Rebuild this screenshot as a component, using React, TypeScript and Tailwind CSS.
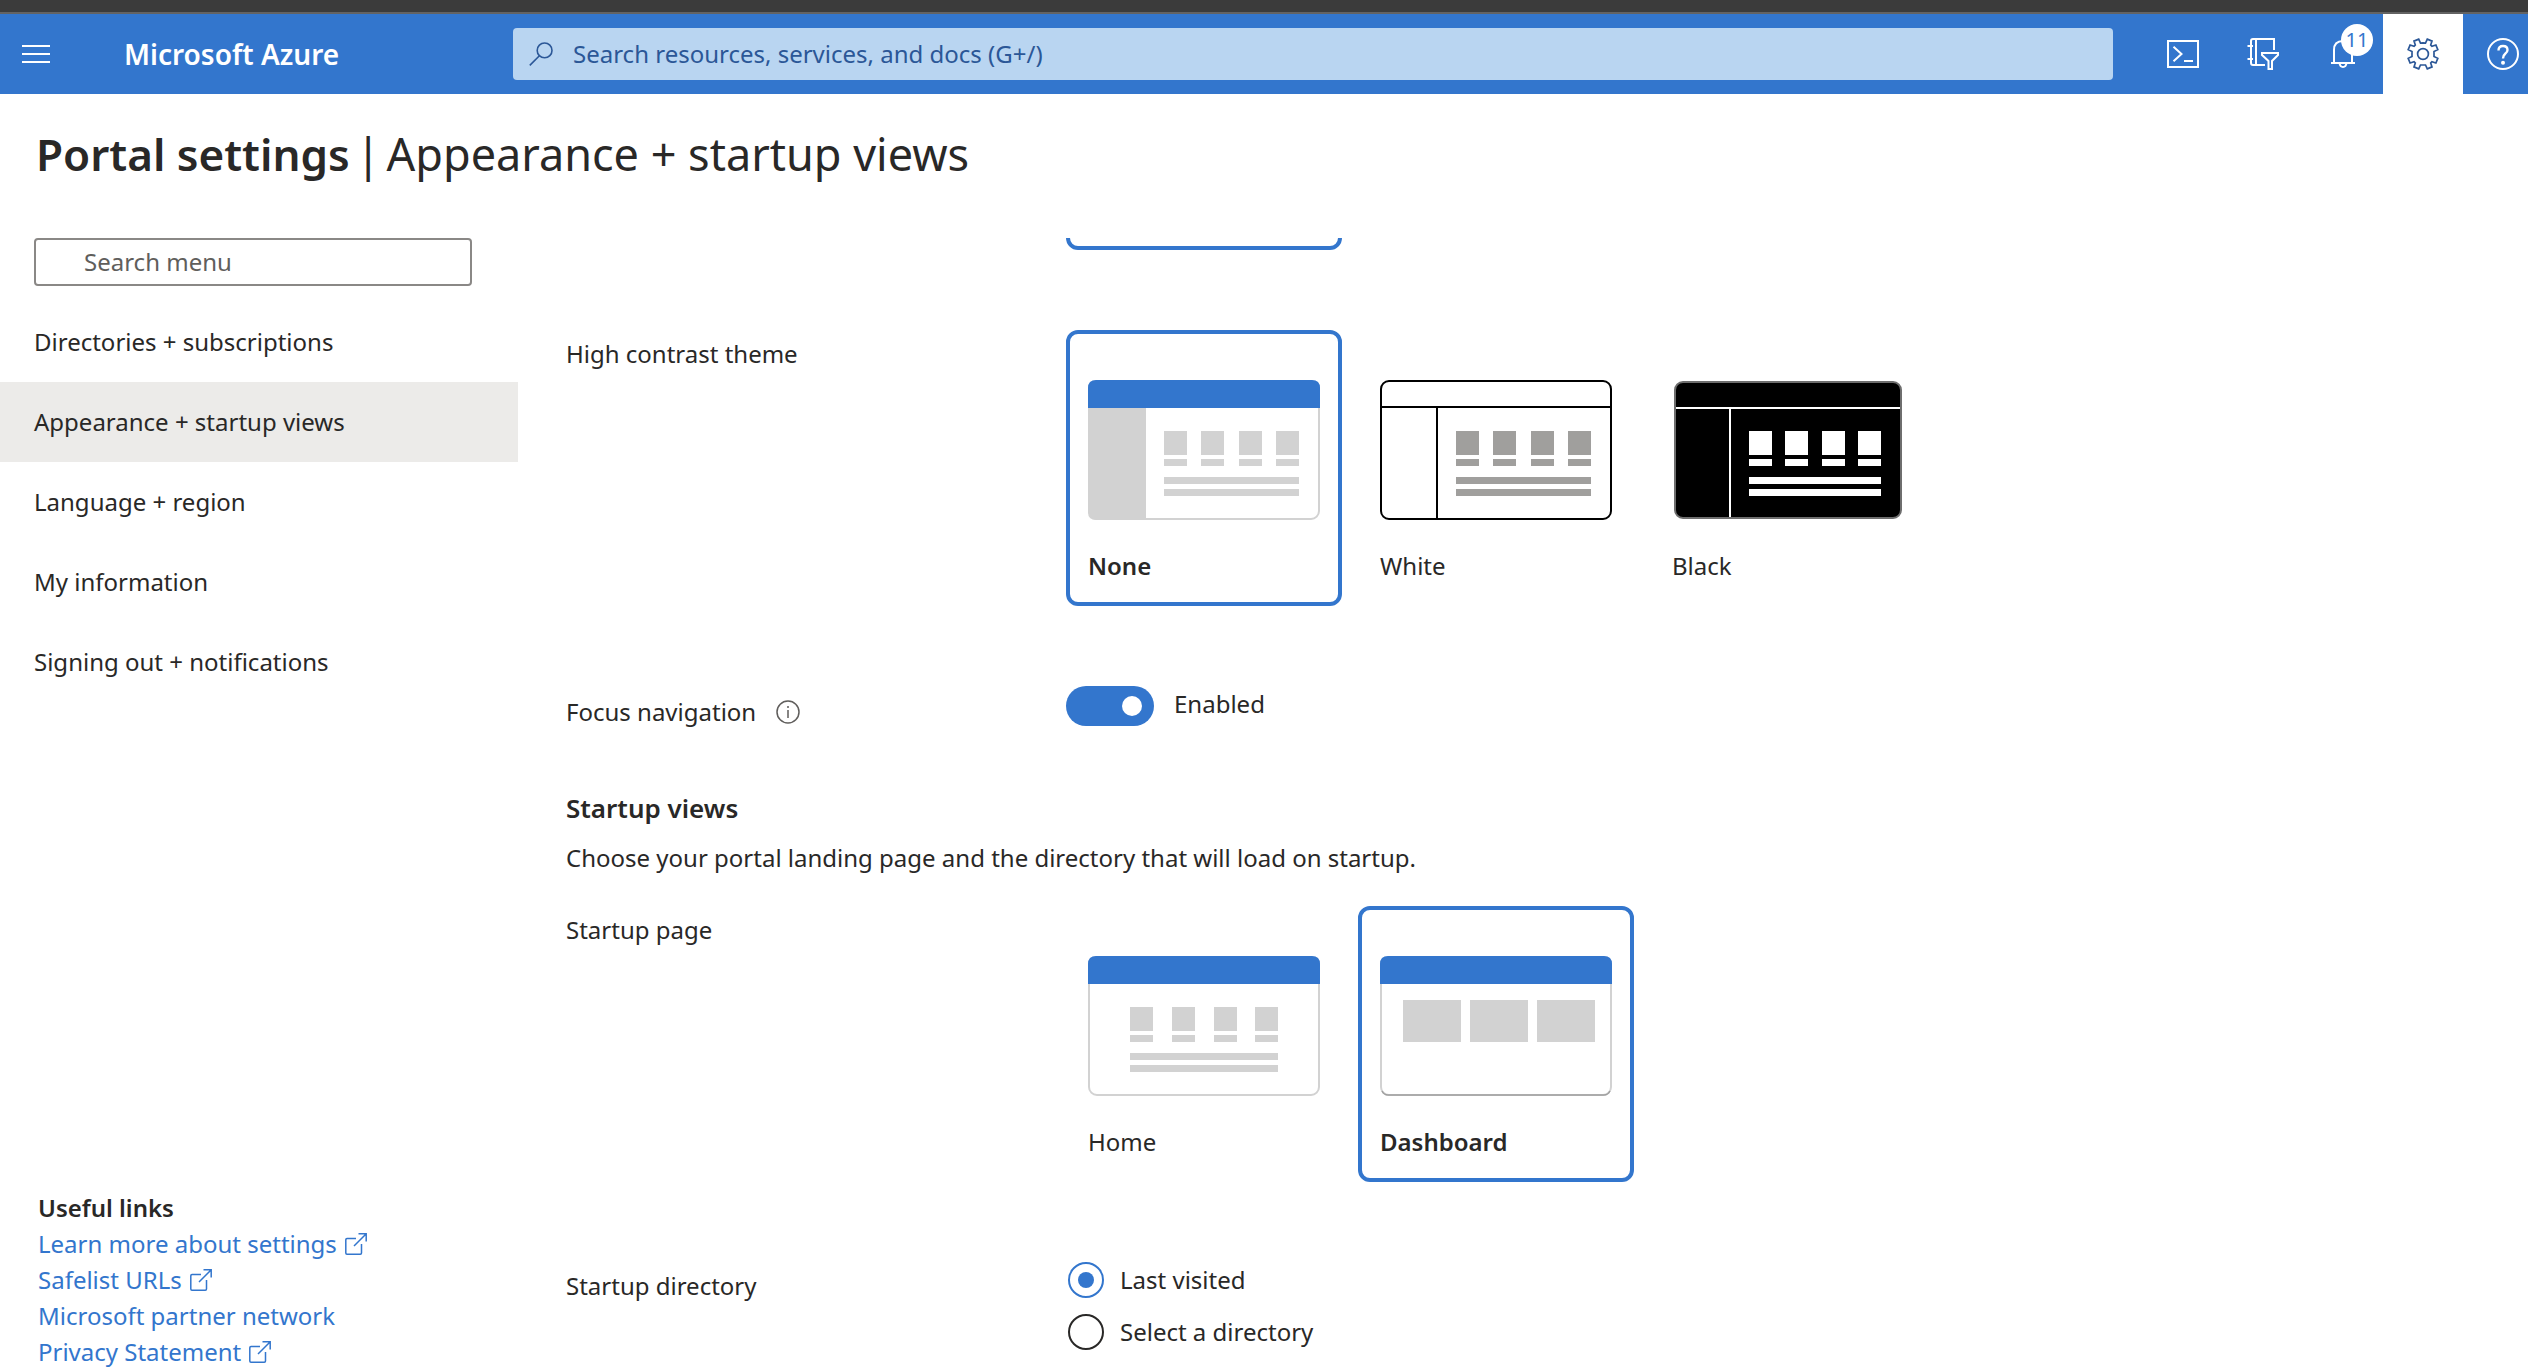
import React, { useState } from "react";

type IconProps = { className?: string };

const SearchIcon = ({ className }: IconProps) => (
  <svg viewBox="0 0 24 24" className={className} fill="none" stroke="currentColor" strokeWidth="1.6">
    <circle cx="15.6" cy="8.4" r="7.4" />
    <path d="M10.4 13.8L0.8 23.4" />
  </svg>
);

const CloudShellIcon = ({ className }: IconProps) => (
  <svg viewBox="0 0 32 32" className={className} fill="none" stroke="currentColor" strokeWidth="2">
    <path d="M1 3H31V29H1Z" />
    <path d="M6.5 8.8L14.5 16L6.5 23.2M17 23H26" />
  </svg>
);

const DirectoryFilterIcon = ({ className }: IconProps) => (
  <svg viewBox="0 0 32 32" className={className} fill="none" stroke="currentColor" strokeWidth="2">
    <path d="M27 12V1H6Q4 1 4 3V25Q4 27 6 27H18M9 1V27" />
    <path d="M0.500 8H6M0.500 21H6" />
    <path d="M15 15H31V17L25 23V31H21.500V23L15 17Z" />
  </svg>
);

const BellIcon = ({ className }: IconProps) => (
  <svg viewBox="0 0 24 32" className={className} fill="none" stroke="currentColor" strokeWidth="2">
    <path d="M3 25V12Q3 3 12 3Q21 3 21 12V25M0 25H24" />
    <path d="M8.500 25Q9 29 12 29Q15 29 15.500 25" />
  </svg>
);

const GearIcon = ({ className }: IconProps) => (
  <svg viewBox="0 0 32 32" className={className} fill="none" stroke="currentColor" strokeWidth="1.7">
    <circle cx="16" cy="16" r="5.400" />
    <path d="M16 4.800L18.500 5L20.300 1.200L25 3.100L23.700 7.100L24.900 8.300L28.900 7L30.800 11.700L27 13.500V18.500L30.800 20.300L28.900 25L24.900 23.700L23.700 24.900L25 28.900L20.300 30.800L18.500 27H13.500L11.700 30.800L7 28.900L8.300 24.900L7.100 23.700L3.100 25L1.200 20.300L5 18.500V13.500L1.200 11.700L3.100 7L7.100 8.300L8.300 7.100L7 3.100L11.700 1.200L13.500 5Z" />
  </svg>
);

const HelpIcon = ({ className }: IconProps) => (
  <svg viewBox="0 0 32 32" className={className} fill="none" stroke="currentColor" strokeWidth="2">
    <circle cx="16" cy="16" r="15" />
    <path d="M11.500 12.500Q11.500 8 16 8Q20.500 8 20.500 12Q20.500 14 18.200 15.800Q16 17.600 16 20.500" strokeWidth="2.4" />
    <circle cx="16" cy="24.700" r="2" fill="currentColor" stroke="none" />
  </svg>
);

const InfoIcon = ({ className }: IconProps) => (
  <svg viewBox="0 0 24 24" className={className} fill="none" stroke="currentColor" strokeWidth="1.5">
    <circle cx="12" cy="12" r="11" />
    <path d="M12 10V18M12 6V8" />
  </svg>
);

const ExternalIcon = ({ className }: IconProps) => (
  <svg viewBox="0 0 22 22" className={className} fill="none" stroke="currentColor" strokeWidth="1.5">
    <path d="M11 5.500H2Q0.800 5.500 0.800 6.700V20Q0.800 21.200 2 21.200H15.300Q16.500 21.200 16.500 20V11" />
    <path d="M9 13L21 1M13.500 0.800H21.200V8.500" />
  </svg>
);

type TilesProps = { fill: string; columns: number[]; lineWidth: number };

const Tiles = ({ fill, columns, lineWidth }: TilesProps) => (
  <g fill={fill}>
    {columns.map((x) => (
      <g key={x}>
        <rect x={x} y="51" width="23" height="24" />
        <rect x={x} y="79" width="23" height="7" />
      </g>
    ))}
    <rect x={columns[0]} y="97" width={lineWidth} height="7" />
    <rect x={columns[0]} y="109" width={lineWidth} height="7" />
  </g>
);

const BlueFrame = ({ children }: { children: React.ReactNode }) => (
  <>
    <rect x="1" y="1" width="230" height="138" rx="8" fill="#fff" stroke="#d2d2d2" strokeWidth="2" />
    {children}
    <path d="M0 28V8Q0 0 8 0H224Q232 0 232 8V28Z" fill="#3376cd" />
  </>
);

const NoneArt = () => (
  <BlueFrame>
    <path d="M0 28H58V140H8Q0 140 0 132Z" fill="#d2d2d2" />
    <Tiles fill="#d2d2d2" columns={[76, 113, 151, 188]} lineWidth={135} />
  </BlueFrame>
);

const WhiteArt = () => (
  <>
    <rect x="1" y="1" width="230" height="138" rx="8" fill="#fff" stroke="#000" strokeWidth="2" />
    <path d="M0 27H232M57 27V139" stroke="#000" strokeWidth="2" />
    <Tiles fill="#a09f9d" columns={[76, 113, 151, 188]} lineWidth={135} />
  </>
);

const BlackArt = () => (
  <>
    <rect x="3" y="2" width="226" height="136" rx="8" fill="#000" stroke="#6e6e6e" strokeWidth="2" />
    <path d="M4 28H228M58 28V137" stroke="#fff" strokeWidth="2" />
    <Tiles fill="#fff" columns={[77, 113, 150, 186]} lineWidth={132} />
  </>
);

const HomeArt = () => (
  <BlueFrame>
    <Tiles fill="#d2d2d2" columns={[42, 84, 126, 167]} lineWidth={148} />
  </BlueFrame>
);

const DashboardArt = () => (
  <BlueFrame>
    <path d="M2 135Q4 139 8 139H224Q228 139 230 135" fill="none" stroke="#a0a0a0" strokeWidth="1.5" />
    <g fill="#d2d2d2">
      <rect x="23" y="44" width="58" height="42" />
      <rect x="90" y="44" width="58" height="42" />
      <rect x="157" y="44" width="58" height="42" />
    </g>
  </BlueFrame>
);

type CardProps = { label: string; selected: boolean; onSelect: () => void; children: React.ReactNode };

const OptionCard = ({ label, selected, onSelect, children }: CardProps) => (
  <button
    type="button"
    aria-pressed={selected}
    onClick={onSelect}
    className={
      "flex h-[276px] w-[276px] shrink-0 flex-col items-start rounded-xl border-4 px-[18px] pt-[46px] text-left " +
      (selected ? "border-[#3376cd] font-semibold" : "border-transparent")
    }
  >
    <svg viewBox="0 0 232 140" className="h-[140px] w-[232px]" aria-hidden="true">
      {children}
    </svg>
    <span className="mt-7">{label}</span>
  </button>
);

const navItems = [
  "Directories + subscriptions",
  "Appearance + startup views",
  "Language + region",
  "My information",
  "Signing out + notifications",
];

const links = [
  { text: "Learn more about settings", external: true },
  { text: "Safelist URLs", external: true },
  { text: "Microsoft partner network", external: false },
  { text: "Privacy Statement", external: true },
];

const headerCell = "flex h-20 w-20 shrink-0 items-center justify-center";

export default function App() {
  const [contrast, setContrast] = useState("None");
  const [startup, setStartup] = useState("Dashboard");
  const [focusNav, setFocusNav] = useState(true);
  const [directory, setDirectory] = useState("Last visited");

  return (
    <div className="flex min-h-screen flex-col overflow-hidden bg-white font-['Noto_Sans','Open_Sans',sans-serif] text-[24px] leading-9 text-[#292827]">
      <div className="h-[14px] border-b-2 border-[#636363] bg-[#3b3b3b]" />
      <header className="flex h-20 items-center overflow-hidden bg-[#3376cd] text-white">
        <div className="flex w-[513px] shrink-0 items-center">
          <button type="button" aria-label="Show portal menu" className="ml-[22px] flex w-7 flex-col gap-1.5">
            <span className="h-0.5 bg-white" />
            <span className="h-0.5 bg-white" />
            <span className="h-0.5 bg-white" />
          </button>
          <a href="#home" className="ml-[74px] text-[28px] font-semibold">Microsoft Azure</a>
        </div>
        <label className="flex h-[52px] min-w-0 flex-1 items-center rounded bg-[#b9d5f1] pl-4 text-[#2b5797]">
          <SearchIcon className="h-6 w-6 shrink-0" />
          <input
            type="text"
            aria-label="Search resources, services, and docs"
            placeholder="Search resources, services, and docs (G+/)"
            className="ml-5 h-full min-w-0 flex-1 bg-transparent pb-0.5 outline-none placeholder:text-[#2b5797] placeholder:opacity-100"
          />
        </label>
        <div className="-mr-[15px] ml-[30px] flex shrink-0">
          <button type="button" aria-label="Cloud Shell" className={headerCell}>
            <CloudShellIcon className="h-8 w-8" />
          </button>
          <button type="button" aria-label="Directory filter" className={headerCell}>
            <DirectoryFilterIcon className="h-8 w-8" />
          </button>
          <button type="button" aria-label="Notifications" className={headerCell + " relative"}>
            <BellIcon className="h-8 w-6" />
            <span className="absolute top-2.5 left-[38px] flex h-8 w-8 items-center justify-center rounded-full bg-white text-[20px] text-[#3376cd]">
              11
            </span>
          </button>
          <button type="button" aria-label="Settings" className={headerCell + " bg-white text-[#2b5797]"}>
            <GearIcon className="h-8 w-8" />
          </button>
          <button type="button" aria-label="Help" className={headerCell}>
            <HelpIcon className="h-8 w-8" />
          </button>
        </div>
      </header>

      <h1 className="flex items-baseline gap-1.5 px-9 pt-7 pb-[52px] text-[45px] leading-[64px]">
        <span className="text-[44px] font-semibold">Portal settings</span>
        <span>|</span>
        <span>Appearance + startup views</span>
      </h1>

      <div className="flex flex-1">
        <aside className="flex w-[518px] shrink-0 flex-col">
          <input
            type="text"
            aria-label="Search menu"
            placeholder="Search menu"
            className="mr-[46px] ml-[34px] h-12 rounded border-2 border-[#8a8886] pb-0.5 pl-12 outline-none placeholder:text-[#605e5c] placeholder:opacity-100"
          />
          <nav className="mt-4 flex flex-col">
            {navItems.map((item, i) => (
              <a
                key={item}
                href="#settings"
                className={"flex h-20 items-center pl-[34px] " + (i === 1 ? "bg-[#ecebe9]" : "")}
              >
                {item}
              </a>
            ))}
          </nav>
          <section className="mt-auto pb-0.5 pl-[38px]">
            <h2 className="font-semibold">Useful links</h2>
            <ul>
              {links.map((link) => (
                <li key={link.text}>
                  <a href="#link" className="inline-flex items-center gap-2 align-top text-[#3376cd]">
                    {link.text}
                    {link.external && <ExternalIcon className="h-[22px] w-[22px]" />}
                  </a>
                </li>
              ))}
            </ul>
          </section>
        </aside>

        <main className="ml-12 min-w-0 flex-1">
          <div className="ml-[500px] flex h-3 items-end overflow-hidden">
            <div className="h-[276px] w-[276px] shrink-0 rounded-xl border-4 border-[#3376cd]" />
          </div>

          <section className="mt-20 flex">
            <h3 className="w-[500px] shrink-0 pt-1.5">High contrast theme</h3>
            <div className="flex gap-4">
              <OptionCard label="None" selected={contrast === "None"} onSelect={() => setContrast("None")}>
                <NoneArt />
              </OptionCard>
              <OptionCard label="White" selected={contrast === "White"} onSelect={() => setContrast("White")}>
                <WhiteArt />
              </OptionCard>
              <OptionCard label="Black" selected={contrast === "Black"} onSelect={() => setContrast("Black")}>
                <BlackArt />
              </OptionCard>
            </div>
          </section>

          <section className="mt-20 flex">
            <div className="flex w-[500px] shrink-0 items-center gap-5 pt-2">
              <label htmlFor="focus-nav">Focus navigation</label>
              <InfoIcon className="h-6 w-6 text-[#605e5c]" />
            </div>
            <button
              id="focus-nav"
              type="button"
              role="switch"
              aria-checked={focusNav}
              onClick={() => setFocusNav(!focusNav)}
              className={
                "flex h-10 w-[88px] items-center rounded-full px-3 " +
                (focusNav ? "justify-end bg-[#3376cd]" : "justify-start bg-[#8a8886]")
              }
            >
              <span className="h-5 w-5 rounded-full bg-white" />
            </button>
            <span className="ml-5">Enabled</span>
          </section>

          <h2 className="mt-[60px] text-[26px] font-semibold">Startup views</h2>
          <p className="mt-3.5">Choose your portal landing page and the directory that will load on startup.</p>

          <section className="mt-[30px] flex">
            <h3 className="w-[500px] shrink-0 pt-1.5">Startup page</h3>
            <div className="flex gap-4">
              <OptionCard label="Home" selected={startup === "Home"} onSelect={() => setStartup("Home")}>
                <HomeArt />
              </OptionCard>
              <OptionCard label="Dashboard" selected={startup === "Dashboard"} onSelect={() => setStartup("Dashboard")}>
                <DashboardArt />
              </OptionCard>
            </div>
          </section>

          <section className="mt-20 flex">
            <h3 className="w-[500px] shrink-0 pt-1.5">Startup directory</h3>
            <div className="flex flex-col gap-4 pl-0.5">
              {["Last visited", "Select a directory"].map((option) => (
                <label key={option} className="flex items-center gap-4">
                  <input
                    type="radio"
                    name="directory"
                    checked={directory === option}
                    onChange={() => setDirectory(option)}
                    className="flex h-9 w-9 appearance-none items-center justify-center rounded-full border-2 border-[#292827] before:h-4 before:w-4 before:rounded-full checked:border-[#3376cd] checked:before:bg-[#3376cd]"
                  />
                  {option}
                </label>
              ))}
            </div>
          </section>
        </main>
      </div>
    </div>
  );
}
